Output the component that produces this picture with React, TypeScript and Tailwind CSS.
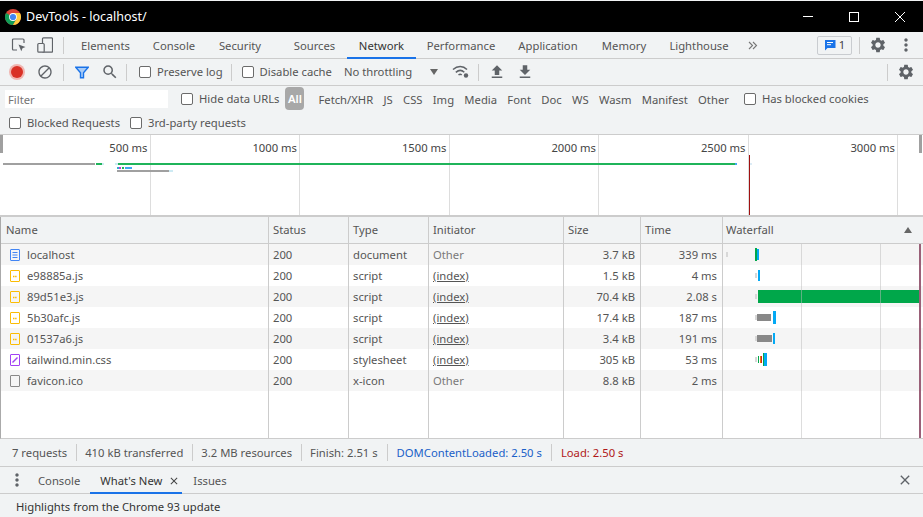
import { MdSettings, MdFileUpload, MdFileDownload, MdBlock, MdSearch, MdMoreVert, MdClose } from 'react-icons/md';

const font = { fontFamily: '"Noto Sans", sans-serif' };

function Divider({ className = '' }: { className?: string }) {
  return <div className={`w-px h-[17px] bg-[#ccc] shrink-0 ${className}`} />;
}

function Check({ label, className = '' }: { label: string; className?: string }) {
  return (
    <div className={`flex items-center shrink-0 ${className}`}>
      <div className="w-[12px] h-[12px] rounded-[2px] border border-[#6b6b6b] bg-white shrink-0" />
      <span className="ml-[6px] whitespace-nowrap">{label}</span>
    </div>
  );
}

function ChromeLogo() {
  return (
    <svg viewBox="0 0 16 16" className="w-[16px] h-[16px] shrink-0">
      <circle cx="8" cy="8" r="8" fill="#db4437" />
      <path d="M8 8 L1.07 4 A8 8 0 0 0 8 16 L11.46 10Z" fill="#0f9d58" />
      <path d="M8 4 L14.93 4 A8 8 0 0 1 8 16 L11.46 10Z" fill="#ffcd40" />
      <circle cx="8" cy="8" r="3.9" fill="#fff" />
      <circle cx="8" cy="8" r="3.1" fill="#4285f4" />
    </svg>
  );
}

function TitleBar() {
  return (
    <div className="h-[31px] mt-px bg-black text-white flex items-center pl-[5px] shrink-0">
      <ChromeLogo />
      <span className="ml-[5px] pt-[2px] text-[12.5px] whitespace-nowrap">DevTools - localhost/</span>
      <div className="ml-auto flex items-center">
        <div className="w-[46px] flex justify-center">
          <div className="w-[10px] h-px bg-white" />
        </div>
        <div className="w-[46px] flex justify-center">
          <div className="w-[10px] h-[10px] border border-white" />
        </div>
        <div className="w-[46px] flex justify-center">
          <svg viewBox="0 0 10 10" className="w-[10px] h-[10px]" stroke="#fff" fill="none">
            <path d="M0 0 L10 10 M10 0 L0 10" />
          </svg>
        </div>
      </div>
    </div>
  );
}

const tabs = [
  { name: 'Elements', w: 'w-[71px]' },
  { name: 'Console', w: 'w-[66px]' },
  { name: 'Security', w: 'w-[66px] mr-[9px]' },
  { name: 'Sources', w: 'w-[65px]' },
  { name: 'Network', w: 'w-[69px]', active: true },
  { name: 'Performance', w: 'w-[90px]' },
  { name: 'Application', w: 'w-[84px]' },
  { name: 'Memory', w: 'w-[68px]' },
  { name: 'Lighthouse', w: 'w-[82px]' },
];

function MainTabs() {
  return (
    <div className="h-[27px] flex items-stretch border-b border-[#ccc] bg-[#f1f3f4] shrink-0 pl-[11px]">
      <div className="flex items-center shrink-0 mr-[6px]">
        <svg viewBox="0 0 16 16" className="w-[16px] h-[16px]" fill="none" stroke="#5f6368" strokeWidth="1.2">
          <path d="M6 13H2.5a1 1 0 0 1-1-1V3a1 1 0 0 1 1-1h9.5a1 1 0 0 1 1 1v3" />
          <path d="M7.5 7.5l7 2.6-3 1.2-1.2 3z" fill="#5f6368" stroke="none" />
        </svg>
        <svg viewBox="0 0 16 16" className="w-[16px] h-[16px] ml-[10px]" fill="none" stroke="#5f6368" strokeWidth="1.2">
          <rect x="5.5" y="0.8" width="10" height="14.4" rx="1" />
          <rect x="0.8" y="6.5" width="6.4" height="8.7" rx="1" fill="#f1f3f4" />
        </svg>
        <Divider className="ml-[10px]" />
      </div>
      {tabs.map((t) => (
        <div
          key={t.name}
          className={`${t.w} flex items-center justify-center pt-[2px] border-b-2 -mb-px shrink-0 ${
            t.active ? 'border-[#1a73e8] text-[#333]' : 'border-transparent'
          }`}
        >
          {t.name}
        </div>
      ))}
      <div className="ml-[8px] flex items-center text-[#6e6e6e]">
        <svg viewBox="0 0 10 9" className="w-[10px] h-[9px]" fill="none" stroke="#777" strokeWidth="1.1">
          <path d="M1 1l3.5 3.5L1 8M5 1l3.5 3.5L5 8" />
        </svg>
      </div>
      <div className="ml-auto flex items-center pr-[7px]">
        <div className="w-[35px] h-[19px] mr-[7px] rounded-[2px] border border-[#c9ccd0] flex items-center justify-center gap-[3px] text-[#444]">
          <svg viewBox="0 0 12 12" className="w-[12px] h-[12px]">
            <path d="M1 1h10.5v8H3.5L1 11.5z" fill="#1a73e8" />
            <path d="M3 3.5h6M3 5.7h4" stroke="#fff" strokeWidth="1" />
          </svg>
          <span>1</span>
        </div>
        <Divider className="h-[15px]" />
        <MdSettings className="w-[18px] h-[18px] text-[#5f6368] ml-[9px]" />
        <MdMoreVert className="w-[20px] h-[20px] text-[#5f6368] ml-[9px]" />
      </div>
    </div>
  );
}

function NetworkToolbar() {
  return (
    <div className="h-[27px] flex items-center border-b border-[#ccc] shrink-0 pl-[11px]">
      <div className="w-[12px] h-[12px] rounded-full bg-[#d93025] shadow-[0_0_0_2px_#f0b5b0] shrink-0" />
      <MdBlock className="w-[16px] h-[16px] text-[#5f6368] ml-[14px] shrink-0" />
      <Divider className="ml-[10px]" />
      <svg viewBox="0 0 14 12" className="w-[14px] h-[13px] ml-[11px] shrink-0">
        <path d="M0.7 0.7h12.6L8.5 6.2v5.1h-3V6.2z" fill="#a9ccf7" stroke="#1a73e8" strokeWidth="1.4" />
      </svg>
      <MdSearch className="w-[18px] h-[18px] text-[#5f6368] ml-[12px] shrink-0" />
      <Divider className="ml-[7px]" />
      <Check label="Preserve log" className="ml-[12px]" />
      <Divider className="ml-[8px]" />
      <Check label="Disable cache" className="ml-[10px]" />
      <span className="ml-[12px] whitespace-nowrap">No throttling</span>
      <div className="ml-[18px] w-0 h-0 border-x-[4px] border-x-transparent border-t-[6px] border-t-[#666]" />
      <svg viewBox="0 0 18 14" className="w-[18px] h-[14px] ml-[14px] shrink-0" fill="none" stroke="#5f6368" strokeWidth="1.5">
        <path d="M1 4.5c4.5-4 10-4 14 0M3.8 7.3c3-2.5 6-2.5 8.5 0M6.5 10c1.2-1 2.2-1 3.2 0" />
        <circle cx="14" cy="10.5" r="2.2" fill="#5f6368" stroke="none" />
      </svg>
      <Divider className="ml-[8px]" />
      <MdFileUpload className="w-[18px] h-[18px] text-[#5f6368] ml-[9px]" />
      <MdFileDownload className="w-[18px] h-[18px] text-[#5f6368] ml-[10px]" />
      <div className="ml-auto flex items-center pr-[8px]">
        <Divider />
        <MdSettings className="w-[18px] h-[18px] text-[#5f6368] ml-[9px]" />
      </div>
    </div>
  );
}

const kinds = ['Fetch/XHR', 'JS', 'CSS', 'Img', 'Media', 'Font', 'Doc', 'WS', 'Wasm', 'Manifest', 'Other'];

function FilterBar() {
  return (
    <div className="h-[49px] border-b border-[#ccc] shrink-0">
      <div className="h-[25px] flex items-center pl-[5px]">
        <div className="w-[163px] h-[18px] bg-white text-[#757575] pl-[3px] pt-[2px] flex items-center shrink-0">Filter</div>
        <Check label="Hide data URLs" className="ml-[13px]" />
        <div className="ml-[6px] w-[19px] h-[23px] rounded-[4px] bg-[#a8a8a8] text-white flex items-center justify-center font-semibold shrink-0">
          All
        </div>
        <div className="ml-[14px] pt-[2px] flex gap-x-[10.3px]">
          {kinds.map((k) => (
            <span key={k} className="whitespace-nowrap">
              {k}
            </span>
          ))}
        </div>
        <Check label="Has blocked cookies" className="ml-[15px]" />
      </div>
      <div className="h-[23px] flex items-center pl-[9px]">
        <Check label="Blocked Requests" />
        <Check label="3rd-party requests" className="ml-[10px]" />
      </div>
    </div>
  );
}

function Overview() {
  const marks = ['500 ms', '1000 ms', '1500 ms', '2000 ms', '2500 ms', '3000 ms'];
  return (
    <div className="relative h-[82px] bg-white border-b-2 border-[#ccc] shrink-0">
      <div className="flex h-full pl-[1px]">
        {marks.map((m) => (
          <div key={m} className="w-[149.5px] h-full border-r border-[#ddd] flex justify-end pr-[2px] pt-[7px] text-[#444] shrink-0">
            {m}
          </div>
        ))}
      </div>
      <div className="absolute left-0 top-0 w-[3px] h-[18px] bg-[#a0a0a0]" />
      <div className="absolute right-[1px] top-0 w-[3px] h-[18px] bg-[#a0a0a0]" />
      <div className="absolute left-[3px] top-[28px] w-[92px] h-[2px] bg-[#a0a0a0]" />
      <div className="absolute left-[96px] top-[28px] w-[6px] h-[2px] bg-[#1fb45a]" />
      <div className="absolute left-[102px] top-[28px] w-[2px] h-[2px] bg-[#cdeaf3]" />
      <div className="absolute left-[115px] top-[28px] w-[3px] h-[2px] bg-[#cdeaf3]" />
      <div className="absolute left-[118px] top-[28px] w-[617px] h-[2px] bg-[#1fb45a]" />
      <div className="absolute left-[735px] top-[28px] w-[2px] h-[2px] bg-[#40a8f0]" />
      <div className="absolute left-[750px] top-[28px] w-[2px] h-[2px] bg-[#dcecf6]" />
      <div className="absolute left-[117px] top-[32px] w-[2px] h-[2px] bg-[#30b0d0]" />
      <div className="absolute left-[119px] top-[32px] w-[2px] h-[2px] bg-[#c040d0]" />
      <div className="absolute left-[122px] top-[32px] w-[2px] h-[2px] bg-[#1fb45a]" />
      <div className="absolute left-[125px] top-[32px] w-[7px] h-[2px] bg-[#40a8f0]" />
      <div className="absolute left-[117px] top-[35px] w-[52px] h-[2px] bg-[#a0a0a0]" />
      <div className="absolute left-[169px] top-[35px] w-[4px] h-[2px] bg-[#cdeaf3]" />
      <div className="absolute left-[749px] top-[20px] w-px h-[60px] bg-[#a01010]" />
    </div>
  );
}

const heads = [
  { label: 'Name', w: 'w-[268px]' },
  { label: 'Status', w: 'w-[80px]' },
  { label: 'Type', w: 'w-[80px]' },
  { label: 'Initiator', w: 'w-[135px]' },
  { label: 'Size', w: 'w-[77px]' },
  { label: 'Time', w: 'w-[82px]' },
];

const rows = [
  { name: 'localhost', icon: 'doc', status: '200', type: 'document', init: 'Other', size: '3.7 kB', time: '339 ms' },
  { name: 'e98885a.js', icon: 'js', status: '200', type: 'script', init: '(index)', size: '1.5 kB', time: '4 ms' },
  { name: '89d51e3.js', icon: 'js', status: '200', type: 'script', init: '(index)', size: '70.4 kB', time: '2.08 s' },
  { name: '5b30afc.js', icon: 'js', status: '200', type: 'script', init: '(index)', size: '17.4 kB', time: '187 ms' },
  { name: '01537a6.js', icon: 'js', status: '200', type: 'script', init: '(index)', size: '3.4 kB', time: '191 ms' },
  { name: 'tailwind.min.css', icon: 'css', status: '200', type: 'stylesheet', init: '(index)', size: '305 kB', time: '53 ms' },
  { name: 'favicon.ico', icon: 'file', status: '200', type: 'x-icon', init: 'Other', size: '8.8 kB', time: '2 ms' },
];

function FileIcon({ kind }: { kind: string }) {
  if (kind === 'doc') {
    return (
      <svg viewBox="0 0 10 12" className="w-[10px] h-[12px] shrink-0" fill="none" stroke="#4285f4">
        <rect x="0.5" y="0.5" width="9" height="11" rx="0.5" />
        <path d="M2.5 3.5h5M2.5 6h5M2.5 8.5h5" />
      </svg>
    );
  }
  if (kind === 'js') {
    return (
      <svg viewBox="0 0 10 12" className="w-[10px] h-[12px] shrink-0" fill="none" stroke="#fbbc04">
        <rect x="0.5" y="0.5" width="9" height="11" rx="0.5" />
        <path d="M3 6.5h4" strokeWidth="1.6" strokeDasharray="1.5 0.6" />
      </svg>
    );
  }
  if (kind === 'css') {
    return (
      <svg viewBox="0 0 10 12" className="w-[10px] h-[12px] shrink-0" fill="none" stroke="#a142f4">
        <rect x="0.5" y="0.5" width="9" height="11" rx="0.5" />
        <path d="M2.5 8.5L7.5 3.5" strokeWidth="1.4" />
      </svg>
    );
  }
  return (
    <svg viewBox="0 0 10 12" className="w-[10px] h-[12px] shrink-0" fill="none" stroke="#888">
      <rect x="0.5" y="0.5" width="9" height="11" rx="0.5" />
    </svg>
  );
}

function Bar({ x, w, top, h, color }: { x: string; w: string; top: string; h: string; color: string }) {
  return <div className={`absolute ${x} ${w} ${top} ${h} ${color}`} />;
}

// bars per row, x is relative to the waterfall column
function WaterfallBars({ index }: { index: number }) {
  const shade = 'bg-[#d8d8d8]';
  if (index === 0)
    return (
      <>
        <Bar x="left-[3px]" w="w-[2px]" top="top-[8px]" h="h-[5px]" color={shade} />
        <Bar x="left-[32px]" w="w-[2px]" top="top-[4px]" h="h-[13px]" color="bg-[#00a74a]" />
        <Bar x="left-[34px]" w="w-[2px]" top="top-[5px]" h="h-[11px]" color="bg-[#03a9f4]" />
      </>
    );
  if (index === 1)
    return (
      <>
        <Bar x="left-[32px]" w="w-[2px]" top="top-[8px]" h="h-[5px]" color={shade} />
        <Bar x="left-[35px]" w="w-[2px]" top="top-[5px]" h="h-[11px]" color="bg-[#03a9f4]" />
      </>
    );
  if (index === 2)
    return (
      <>
        <Bar x="left-[32px]" w="w-[2px]" top="top-[8px]" h="h-[5px]" color={shade} />
        <Bar x="left-[35px]" w="w-[161px]" top="top-[4px]" h="h-[13px]" color="bg-[#00a74a]" />
      </>
    );
  if (index === 3)
    return (
      <>
        <Bar x="left-[32px]" w="w-[2px]" top="top-[8px]" h="h-[5px]" color={shade} />
        <Bar x="left-[34px]" w="w-[14px]" top="top-[7px]" h="h-[7px]" color="bg-[#888]" />
        <Bar x="left-[50px]" w="w-[3px]" top="top-[4px]" h="h-[13px]" color="bg-[#03a9f4]" />
      </>
    );
  if (index === 4)
    return (
      <>
        <Bar x="left-[32px]" w="w-[2px]" top="top-[8px]" h="h-[5px]" color={shade} />
        <Bar x="left-[34px]" w="w-[15px]" top="top-[7px]" h="h-[7px]" color="bg-[#888]" />
        <Bar x="left-[50px]" w="w-[2px]" top="top-[5px]" h="h-[11px]" color="bg-[#03a9f4]" />
      </>
    );
  if (index === 5)
    return (
      <>
        <Bar x="left-[32px]" w="w-[2px]" top="top-[8px]" h="h-[5px]" color={shade} />
        <Bar x="left-[35px]" w="w-px" top="top-[7px]" h="h-[7px]" color="bg-[#00a74a]" />
        <Bar x="left-[37px]" w="w-px" top="top-[7px]" h="h-[7px]" color="bg-[#f57c00]" />
        <Bar x="left-[38px]" w="w-px" top="top-[7px]" h="h-[7px]" color="bg-[#c62828]" />
        <Bar x="left-[40px]" w="w-px" top="top-[4px]" h="h-[13px]" color="bg-[#00a74a]" />
        <Bar x="left-[41px]" w="w-[3px]" top="top-[4px]" h="h-[13px]" color="bg-[#03a9f4]" />
      </>
    );
  return null;
}

function Table() {
  return (
    <div className="h-[222px] flex flex-col shrink-0 border-b border-[#ccc] border-l border-l-[#aaa] overflow-hidden">
      <div className="h-[27px] flex bg-[#f1f3f4] border-b border-[#ccc] shrink-0">
        {heads.map((h, i) => (
          <div key={h.label} className={`${h.w} flex items-center ${i === 0 ? 'pl-[5px]' : 'pl-[4px]'} border-r border-[#ccc] shrink-0`}>
            {h.label}
          </div>
        ))}
        <div className="flex-1 flex items-center pl-[3px] pr-[11px] justify-between">
          Waterfall
          <div className="w-0 h-0 border-x-[4px] border-x-transparent border-b-[6px] border-b-[#666]" />
        </div>
      </div>
      <div className="relative flex-1 flex flex-col">
        {rows.map((r, i) => (
          <div key={r.name} className={`h-[21px] flex shrink-0 ${i % 2 === 0 ? 'bg-[#f5f5f5]' : 'bg-white'}`}>
            <div className="w-[268px] flex items-center pl-[9px] border-r border-[#ccc] shrink-0">
              <FileIcon kind={r.icon} />
              <span className="ml-[7px]">{r.name}</span>
            </div>
            <div className="w-[80px] flex items-center pl-[4px] border-r border-[#ccc] shrink-0">{r.status}</div>
            <div className="w-[80px] flex items-center pl-[4px] border-r border-[#ccc] shrink-0">{r.type}</div>
            <div className={`w-[135px] flex items-center pl-[4px] border-r border-[#ccc] shrink-0 ${r.init === 'Other' ? 'text-[#7a7a7a]' : 'underline'}`}>
              {r.init}
            </div>
            <div className="w-[77px] flex items-center justify-end pr-[5px] border-r border-[#ccc] shrink-0">{r.size}</div>
            <div className="w-[82px] flex items-center justify-end pr-[5px] border-r border-[#ccc] shrink-0">{r.time}</div>
            <div className="relative flex-1">
              <WaterfallBars index={i} />
            </div>
          </div>
        ))}
        <div className="flex-1 flex bg-white">
          {heads.map((h) => (
            <div key={h.label} className={`${h.w} border-r border-[#ccc] shrink-0`} />
          ))}
        </div>
        {/* waterfall grid and load line */}
        <div className="absolute left-[800px] top-0 bottom-0 w-px bg-[#bbb]/50" />
        <div className="absolute left-[879px] top-0 bottom-0 w-px bg-[#bbb]/50" />
        <div className="absolute left-[918px] top-0 bottom-0 w-[2px] bg-[#9a6078]" />
      </div>
    </div>
  );
}

function StatusBar() {
  return (
    <div className="h-[28px] flex items-center bg-[#f1f3f4] border-b border-[#ccc] pl-[12px] shrink-0">
      <span>7 requests</span>
      <Divider className="ml-[9px] mr-[8px]" />
      <span>410 kB transferred</span>
      <Divider className="ml-[9px] mr-[8px]" />
      <span>3.2 MB resources</span>
      <Divider className="ml-[9px] mr-[8px]" />
      <span>Finish: 2.51 s</span>
      <Divider className="mx-[9px]" />
      <span className="text-[#1a5fc8]">DOMContentLoaded: 2.50 s</span>
      <Divider className="mx-[9px]" />
      <span className="text-[#b01818]">Load: 2.50 s</span>
    </div>
  );
}

function Drawer() {
  return (
    <div className="flex-1 flex flex-col">
      <div className="h-[27px] flex items-stretch border-b border-[#ccc] shrink-0 pl-[7px]">
        <MdMoreVert className="w-[20px] h-[20px] self-center text-[#5f6368]" />
        <div className="ml-[11px] pt-[2px] flex items-center">Console</div>
        <div className="ml-[10px] w-[92px] pl-[10px] pt-[2px] flex items-center border-b-2 border-[#1a73e8] -mb-px text-[#333]">
          What's New
          <MdClose className="w-[12px] h-[12px] ml-[6px] text-[#444]" />
        </div>
        <div className="ml-[11px] pt-[2px] flex items-center">Issues</div>
        <div className="ml-auto pr-[10px] flex items-center">
          <MdClose className="w-[16px] h-[16px] text-[#5f6368]" />
        </div>
      </div>
      <div className="h-[23px] pl-[16px] pt-[3px] flex items-center text-[#333] whitespace-nowrap">Highlights from the Chrome 93 update</div>
    </div>
  );
}

export default function App() {
  return (
    <div
      className="w-[923px] h-[517px] bg-[#f1f3f4] text-[#555] text-[11.25px] leading-none flex flex-col overflow-hidden"
      style={font}
    >
      <TitleBar />
      <MainTabs />
      <NetworkToolbar />
      <FilterBar />
      <Overview />
      <Table />
      <StatusBar />
      <Drawer />
    </div>
  );
}
